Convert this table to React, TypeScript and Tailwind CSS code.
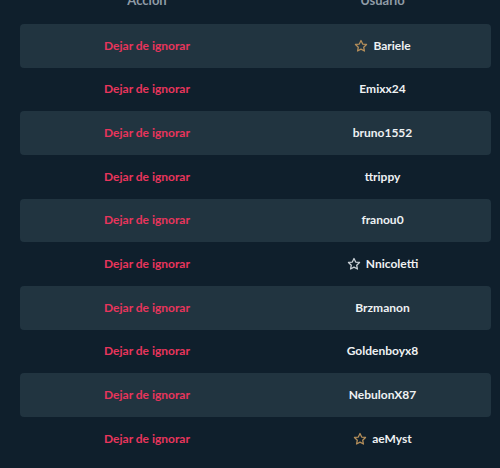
const rows: { user: string; star?: 'gold' | 'grey' }[] = [
  { user: 'Bariele', star: 'gold' },
  { user: 'Emixx24' },
  { user: 'bruno1552' },
  { user: 'ttrippy' },
  { user: 'franou0' },
  { user: 'Nnicoletti', star: 'grey' },
  { user: 'Brzmanon' },
  { user: 'Goldenboyx8' },
  { user: 'NebulonX87' },
  { user: 'aeMyst', star: 'gold' },
];

const Star = ({ color }: { color: string }) => (
  <svg width="14" height="14" viewBox="0 0 24 24" fill="none" stroke={color} strokeWidth="2.2" strokeLinejoin="round">
    <path d="M12 2.5l2.9 6.1 6.6.8-4.9 4.6 1.3 6.6L12 17.3l-5.9 3.3 1.3-6.6-4.9-4.6 6.6-.8z" />
  </svg>
);

export default function App() {
  return (
    <div className="min-h-[468px] w-[500px] bg-[#0f1f2c] pl-5 pr-[9px] font-['Lato',sans-serif] overflow-hidden">
      {/* header, scrolled mostly out of view */}
      <div className="flex h-[24px] items-start text-[13px] font-bold leading-none text-[#8f9ba6]">
        <div className="-mt-[6px] w-[254px] text-center">Acción</div>
        <div className="-mt-[6px] flex-1 text-center">Usuario</div>
      </div>
      <div className="flex flex-col">
        {rows.map((r, i) => (
          <div
            key={r.user}
            className={`flex h-[43.67px] items-center rounded-[4px] text-[12px] font-bold ${i % 2 === 0 ? 'bg-[#213440]' : ''}`}
          >
            <div className="w-[254px] text-center text-[#e8355c]">Dejar de ignorar</div>
            <div className="flex flex-1 items-center justify-center gap-[5px] text-[#eef1f3]">
              {r.star === 'gold' && <Star color="#b48e5a" />}
              {r.star === 'grey' && <Star color="#c9d0d6" />}
              <span>{r.user}</span>
            </div>
          </div>
        ))}
      </div>
    </div>
  );
}
